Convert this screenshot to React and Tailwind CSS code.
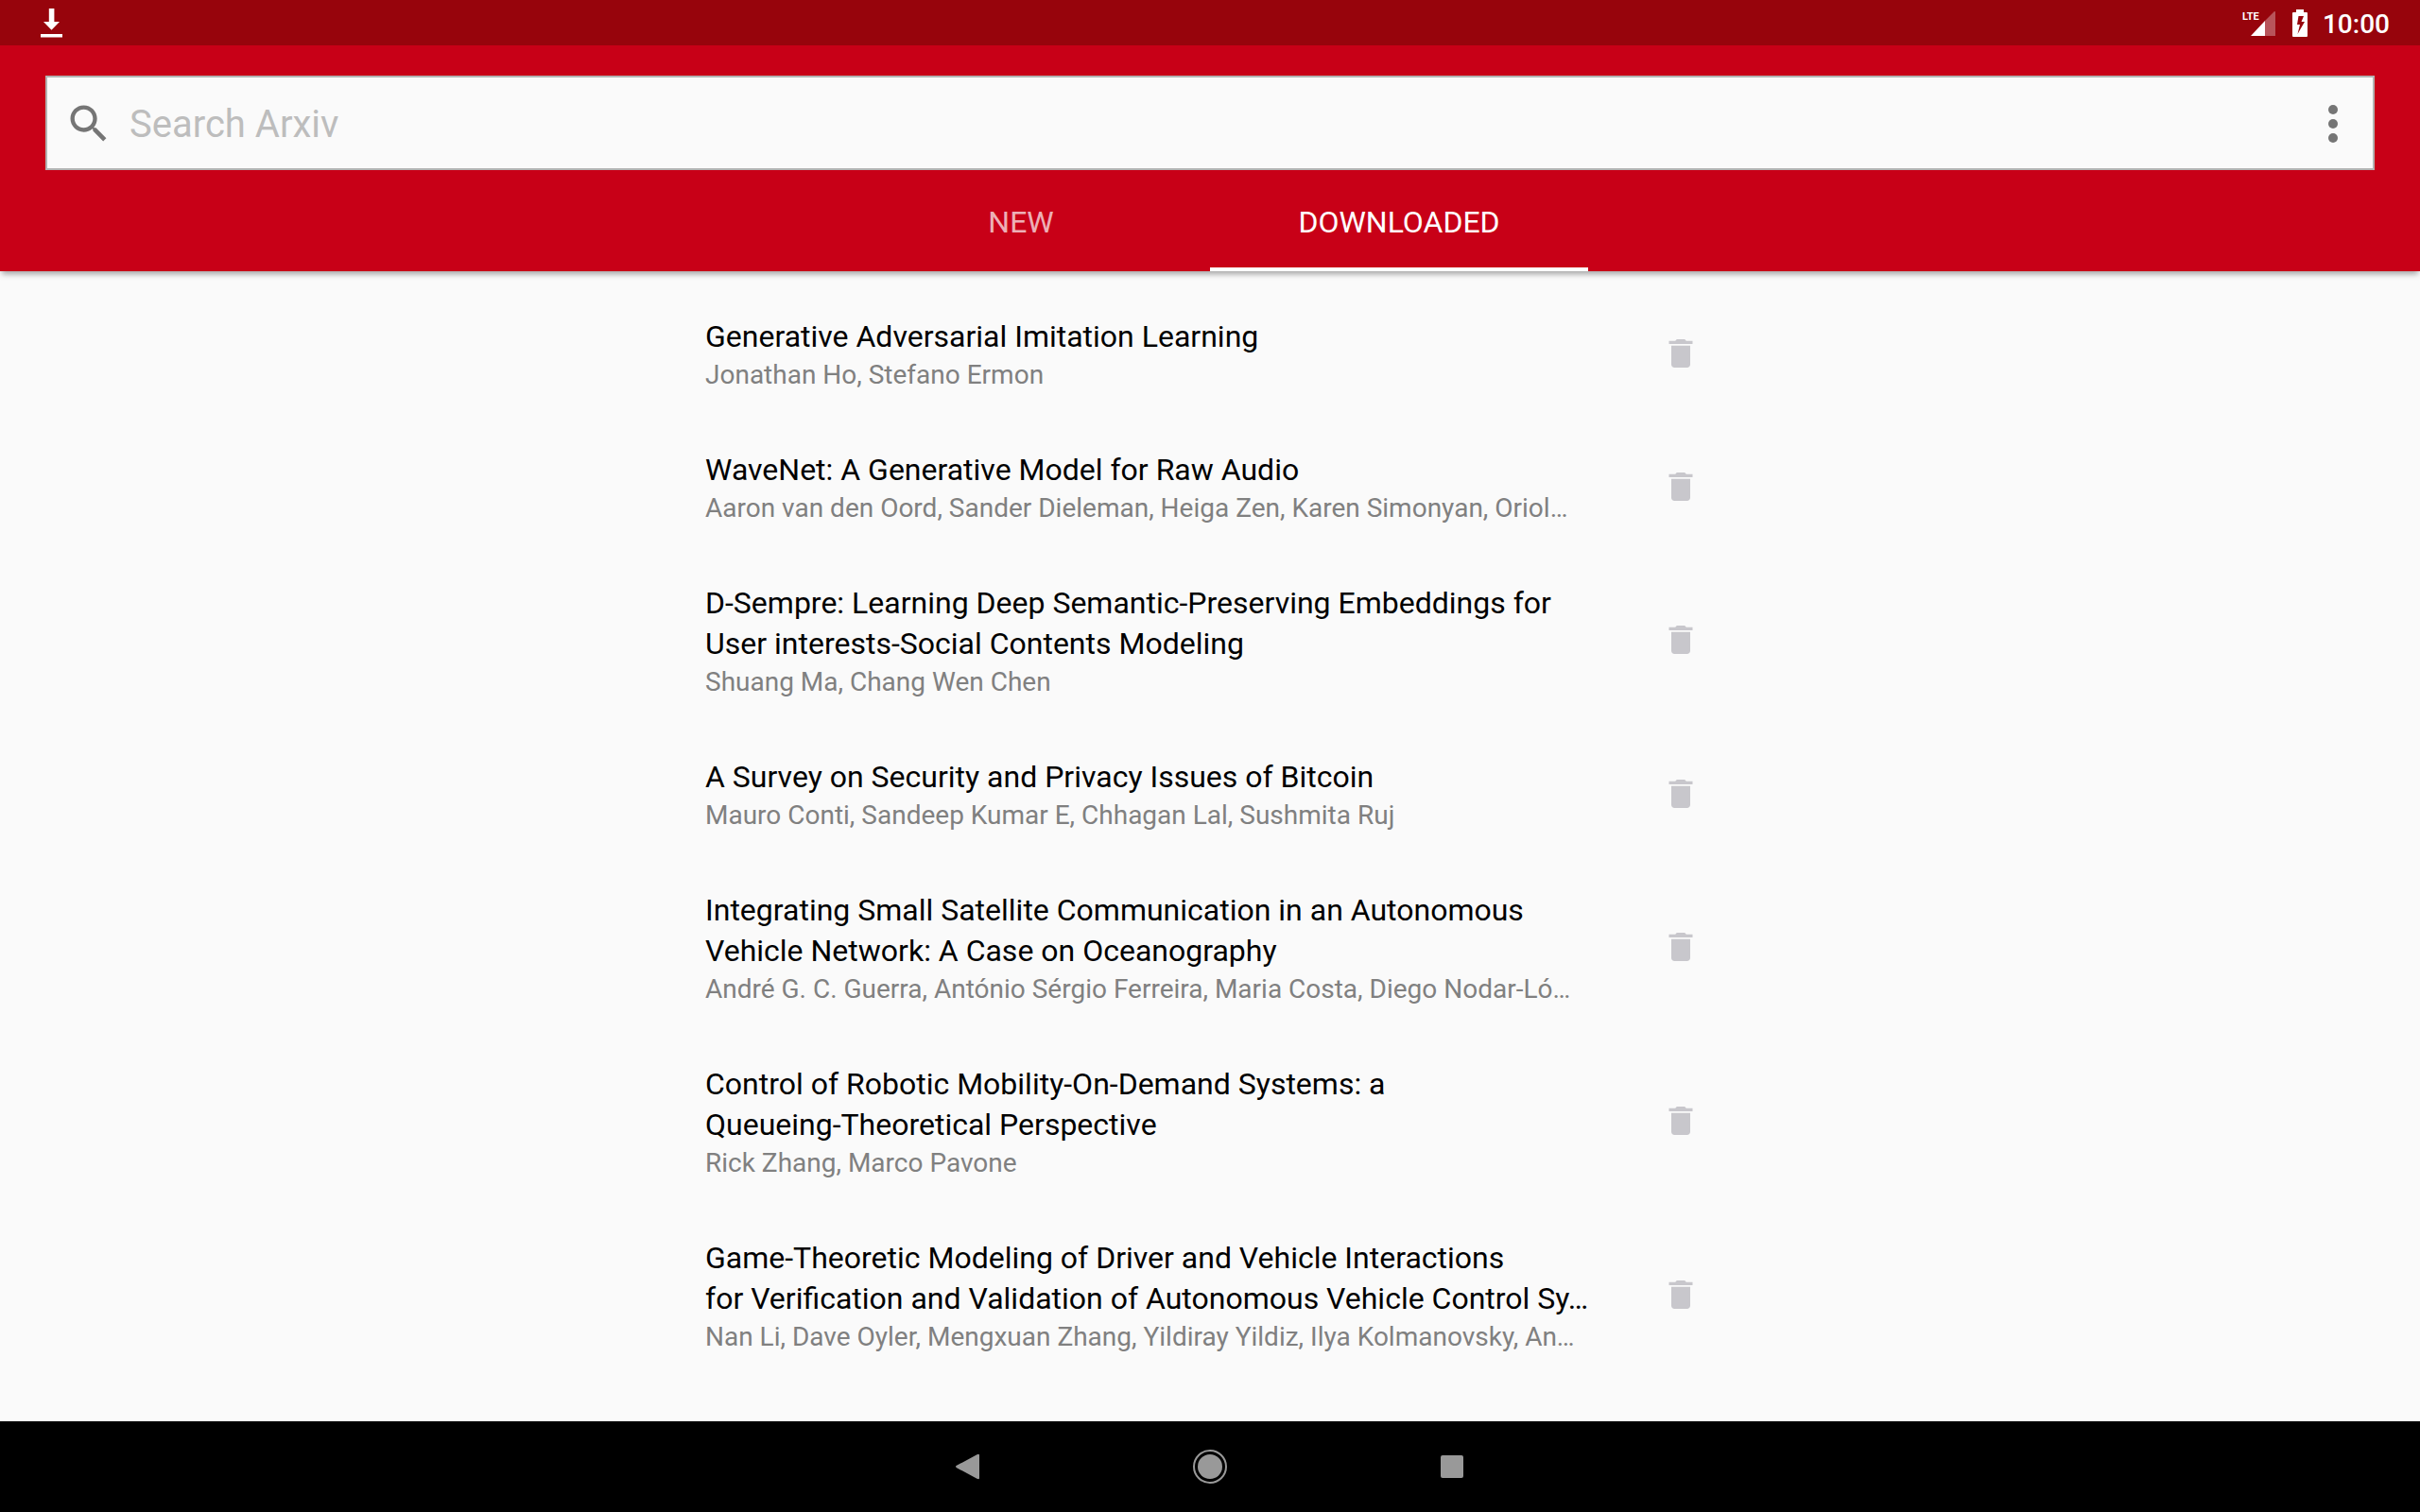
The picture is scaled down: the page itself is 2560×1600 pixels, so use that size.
const papers = [
  { title: ["Generative Adversarial Imitation Learning"], authors: "Jonathan Ho, Stefano Ermon" },
  { title: ["WaveNet: A Generative Model for Raw Audio"], authors: "Aaron van den Oord, Sander Dieleman, Heiga Zen, Karen Simonyan, Oriol…" },
  { title: ["D-Sempre: Learning Deep Semantic-Preserving Embeddings for", "User interests-Social Contents Modeling"], authors: "Shuang Ma, Chang Wen Chen" },
  { title: ["A Survey on Security and Privacy Issues of Bitcoin"], authors: "Mauro Conti, Sandeep Kumar E, Chhagan Lal, Sushmita Ruj" },
  { title: ["Integrating Small Satellite Communication in an Autonomous", "Vehicle Network: A Case on Oceanography"], authors: "André G. C. Guerra, António Sérgio Ferreira, Maria Costa, Diego Nodar-Ló…" },
  { title: ["Control of Robotic Mobility-On-Demand Systems: a", "Queueing-Theoretical Perspective"], authors: "Rick Zhang, Marco Pavone" },
  { title: ["Game-Theoretic Modeling of Driver and Vehicle Interactions", "for Verification and Validation of Autonomous Vehicle Control Sy…"], authors: "Nan Li, Dave Oyler, Mengxuan Zhang, Yildiray Yildiz, Ilya Kolmanovsky, An…" },
];

function StatusBar() {
  return (
    <div className="flex h-12 items-center justify-between bg-[#97040c] pl-[43px] pr-8 text-white">
      <svg width="23" height="31" viewBox="0 0 23 31" fill="currentColor" aria-hidden="true">
        <path d="M8.8 0h5.6v14H20l-8.5 8.7L3 14h5.8zM0 27h23v3.4H0z" />
      </svg>
      <div className="flex items-center">
        <svg width="36" height="30" viewBox="0 0 36 30" fill="currentColor" aria-hidden="true">
          <path d="M24 13V29H9z" />
          <path d="M35 4v25H24V13L33.500 3.500Q35 2.500 35 4z" opacity="0.32" />
          <text x="0" y="12" fontSize="11" fontWeight="700" fontFamily="Roboto, sans-serif">LTE</text>
        </svg>
        <svg className="ml-[17px]" width="16" height="29" viewBox="0 0 16 29" fill="currentColor" aria-hidden="true">
          <path fillRule="evenodd" d="M4 0h8v3h3q1 0 1 1v24q0 1-1 1H1q-1 0-1-1V4q0-1 1-1h3zM6.500 7L5 16h3l-2.500 10L13 13H9.500L12 7z" />
        </svg>
        <span className="ml-4 pt-[3px] text-[28px] leading-8 font-medium">10:00</span>
      </div>
    </div>
  );
}

function SearchBar() {
  return (
    <form className="mx-12 flex h-[100px] items-center border-2 border-[#b3b3b3] bg-[#fafafa] pt-0.5 pl-[18px] pr-3">
      <label htmlFor="search" className="text-[#757575]">
        <svg width="52" height="52" viewBox="0 0 24 24" fill="currentColor" aria-label="Search">
          <path d="M15.500 14h-.79l-.28-.27C15.410 12.590 16 11.110 16 9.500 16 5.910 13.090 3 9.500 3S3 5.910 3 9.500 5.910 16 9.500 16c1.610 0 3.090-.59 4.230-1.570l.27.28v.79l5 4.990L20.490 19l-4.990-5zm-6 0C7.010 14 5 11.990 5 9.500S7.010 5 9.500 5 14 7.010 14 9.500 11.990 14 9.500 14z" />
        </svg>
      </label>
      <input id="search" type="text" placeholder="Search Arxiv" className="ml-[17px] min-w-0 flex-1 bg-transparent pt-0.5 text-[40px] leading-[48px] text-black outline-none placeholder:text-[#bdbdbd]" />
      <button type="button" aria-label="More options" className="text-[#757575]">
        <svg width="60" height="60" viewBox="0 0 24 24" fill="currentColor">
          <circle cx="12" cy="6" r="2" />
          <circle cx="12" cy="12" r="2" />
          <circle cx="12" cy="18" r="2" />
        </svg>
      </button>
    </form>
  );
}

function PaperRow({ paper }) {
  return (
    <li className="flex items-center justify-between py-[30px]">
      <div>
        <h2 className="text-[32px] leading-[43px] text-black">
          {paper.title.map((line) => (
            <span key={line} className="block whitespace-nowrap">{line}</span>
          ))}
        </h2>
        <p className="text-[28px] leading-[38px] whitespace-nowrap text-[#808080]">{paper.authors}</p>
      </div>
      <button type="button" aria-label="Delete download" className="pb-1 text-[#c8c7cc]">
        <svg width="40" height="40" viewBox="0 0 24 24" fill="currentColor">
          <path d="M6 19c0 1.100.9 2 2 2h8c1.100 0 2-.9 2-2V7H6v12zM19.500 4h-4l-1-1h-5l-1 1h-4v2h15V4z" />
        </svg>
      </button>
    </li>
  );
}

export default function App() {
  return (
    <div className="flex min-h-screen flex-col bg-[#fafafa] font-['Roboto',sans-serif]">
      <StatusBar />
      <header className="z-10 bg-[#c80017] pt-8 shadow-[0_5px_6px_-2px_rgba(0,0,0,0.35)]">
        <SearchBar />
        <nav className="mt-[11px] flex h-24 justify-center text-[32px] text-white" role="tablist">
          <button type="button" role="tab" aria-selected="false" className="w-[400px] pb-2 text-white/70">NEW</button>
          <button type="button" role="tab" aria-selected="true" className="w-[400px] border-b-4 border-white pb-1">DOWNLOADED</button>
        </nav>
      </header>
      <main className="flex-1">
        <ul className="mx-auto w-[1068px] pt-[18px] pr-4">
          {papers.map((paper) => (
            <PaperRow key={paper.authors} paper={paper} />
          ))}
        </ul>
      </main>
      <footer className="flex h-24 items-center justify-center gap-[208px] bg-black text-[#999999]">
        <button type="button" aria-label="Back">
          <svg width="48" height="48" viewBox="0 0 48 48" fill="currentColor">
            <path d="M12 22.800 33.500 11.200Q36 10 36 12v24q0 2-2.500.8L12 25.200q-2-1.200 0-2.400z" />
          </svg>
        </button>
        <button type="button" aria-label="Home">
          <svg width="48" height="48" viewBox="0 0 48 48" fill="currentColor">
            <circle cx="24" cy="24" r="13" />
            <circle cx="24" cy="24" r="17" fill="none" stroke="currentColor" strokeWidth="2" />
          </svg>
        </button>
        <button type="button" aria-label="Overview">
          <svg width="48" height="48" viewBox="0 0 48 48" fill="currentColor">
            <rect x="12" y="12" width="24" height="24" rx="2" />
          </svg>
        </button>
      </footer>
    </div>
  );
}
